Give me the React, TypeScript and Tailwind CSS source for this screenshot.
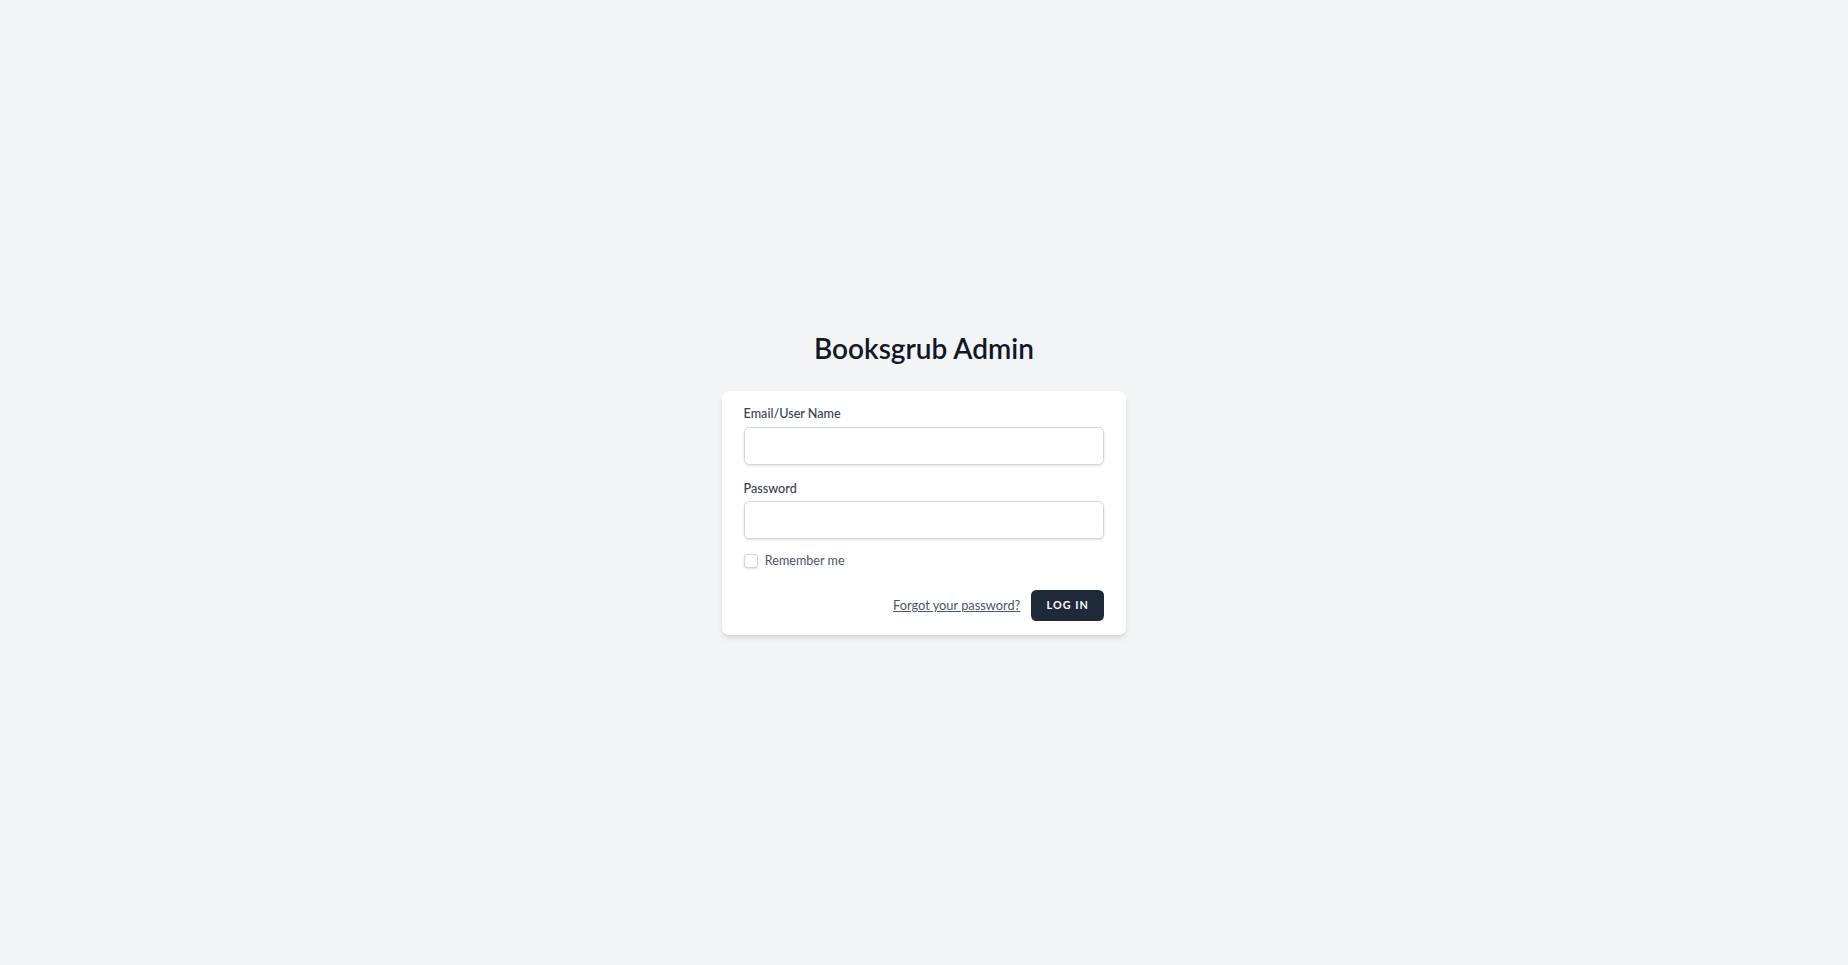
export default function App() {
  return (
    <div
      className="min-h-screen flex flex-col justify-center items-center bg-gray-100 text-gray-900"
      style={{ fontFamily: "Lato, 'Noto Sans', sans-serif" }}
    >
      <h1 className="text-[28px] leading-[36px] font-semibold text-gray-900">Booksgrub Admin</h1>

      <div className="w-[404px] mt-[25px] px-[21.6px] py-[14px] bg-white shadow-md rounded-[7px]">
        <form onSubmit={(e) => e.preventDefault()}>
          <div>
            <label className="block text-[12.6px] leading-[18px] font-medium text-gray-700">
              Email/User Name
            </label>
            <input
              type="text"
              className="block w-full mt-[3.6px] h-[37.8px] border border-gray-300 rounded-[5.4px] shadow-sm px-3 text-[12.6px] focus:outline-none"
            />
          </div>

          <div className="mt-[15px]">
            <label className="block text-[12.6px] leading-[18px] font-medium text-gray-700">
              Password
            </label>
            <input
              type="password"
              className="block w-full mt-[3.6px] h-[37.8px] border border-gray-300 rounded-[5.4px] shadow-sm px-3 text-[12.6px] focus:outline-none"
            />
          </div>

          <div className="mt-[11px]">
            <label className="inline-flex items-center">
              <span className="w-[14px] h-[14px] border border-gray-300 rounded-[3px] bg-white shadow-sm" />
              <span className="ms-[7.2px] text-[12.6px] leading-[18px] text-gray-600">Remember me</span>
            </label>
          </div>

          <div className="flex items-center justify-end mt-[16px]">
            <a href="#" className="underline text-[12.8px] leading-[18px] text-gray-600">
              Forgot your password?
            </a>
            <button
              type="submit"
              className="ms-[10.8px] inline-flex items-center px-[14.4px] py-[7.2px] bg-gray-800 border border-transparent rounded-[5.4px] font-bold text-[10.8px] leading-[14.4px] text-white uppercase tracking-widest"
            >
              Log in
            </button>
          </div>
        </form>
      </div>
    </div>
  );
}
